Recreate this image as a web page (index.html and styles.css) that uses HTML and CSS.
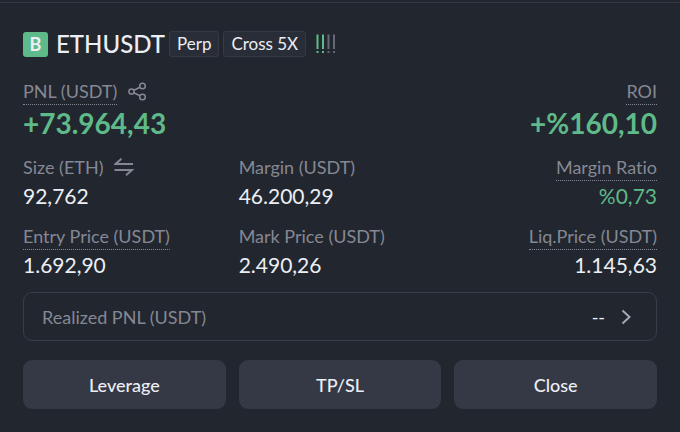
FILE: index.html
```html
<!DOCTYPE html>
<html lang="en">
<head>
    <meta charset="utf-8">
    <meta name="viewport" content="width=device-width, initial-scale=1">
    <title>ETHUSDT Position</title>
    <link rel="stylesheet" href="styles.css">
</head>
<body>
    <main class="position">
        <header class="position-header">
            <span class="side">B</span>
            <h1 class="symbol">ETHUSDT</h1>
            <span class="tag">Perp</span>
            <span class="tag">Cross 5X</span>
            <svg class="risk" width="20" height="20" viewBox="0 0 20 20" aria-hidden="true">
                <g class="risk-on">
                    <path d="M1.5 0.5V15"/><path d="M1.5 17v2"/>
                    <path d="M7 0.5V15"/><path d="M7 17v2"/>
                </g>
                <g class="risk-off">
                    <path d="M12.5 0.5V15"/><path d="M12.5 17v2"/>
                    <path d="M18 0.5V15"/><path d="M18 17v2"/>
                </g>
            </svg>
        </header>

        <dl class="stats">
            <div class="stat wide">
                <dt>
                    <span class="label hint">PNL (USDT)</span>
                    <button type="button" class="icon-btn share" aria-label="Share">
                        <svg width="19" height="19" viewBox="0 0 19 19">
                            <circle cx="3.5" cy="9.5" r="2.6"/>
                            <circle cx="14.5" cy="4" r="2.8"/>
                            <circle cx="14.5" cy="15" r="2.8"/>
                            <path d="M5.8 8.3L12 5.3M5.8 10.7L12 13.7"/>
                        </svg>
                    </button>
                </dt>
                <dd class="big up">+73.964,43</dd>
            </div>
            <div class="stat end">
                <dt><span class="label hint">ROI</span></dt>
                <dd class="big up">+%160,10</dd>
            </div>
            <div class="stat">
                <dt>
                    <span class="label">Size (ETH)</span>
                    <button type="button" class="icon-btn" aria-label="Switch unit">
                        <svg width="20" height="18" viewBox="0 0 20 18">
                            <path d="M7.5 0.8L1.5 6H19M0.5 12H18L12 17.2"/>
                        </svg>
                    </button>
                </dt>
                <dd>92,762</dd>
            </div>
            <div class="stat">
                <dt><span class="label">Margin (USDT)</span></dt>
                <dd>46.200,29</dd>
            </div>
            <div class="stat end">
                <dt><span class="label hint">Margin Ratio</span></dt>
                <dd class="up">%0,73</dd>
            </div>
            <div class="stat">
                <dt><span class="label hint">Entry Price (USDT)</span></dt>
                <dd>1.692,90</dd>
            </div>
            <div class="stat">
                <dt><span class="label">Mark Price (USDT)</span></dt>
                <dd>2.490,26</dd>
            </div>
            <div class="stat end">
                <dt><span class="label hint">Liq.Price (USDT)</span></dt>
                <dd>1.145,63</dd>
            </div>
        </dl>

        <button type="button" class="realized">
            <span class="realized-label">Realized PNL (USDT)</span>
            <span>--</span>
            <svg width="10" height="16" viewBox="0 0 10 16" aria-hidden="true">
                <path d="M1.5 1.5L8.5 8L1.5 14.5"/>
            </svg>
        </button>

        <div class="actions">
            <button type="button" class="action">Leverage</button>
            <button type="button" class="action">TP/SL</button>
            <button type="button" class="action">Close</button>
        </div>
    </main>
</body>
</html>
```

FILE: styles.css
```css
* { box-sizing: border-box; }
body {
    margin: 0;
    padding-top: 2px;
    background: #22262e;
    color: #eceef5;
    font-family: Lato, "Open Sans", sans-serif;
    font-size: 18px;
    font-variant-ligatures: none;
}
button {
    font: inherit;
    color: inherit;
    cursor: pointer;
}
svg {
    display: block;
    fill: none;
    stroke: #858894;
    stroke-width: 2;
}
.position {
    border-top: 1px solid #363944;
    padding: 28px 23px 22px;
}
.position-header {
    display: flex;
    align-items: center;
    gap: 4px;
    height: 26px;
    margin-bottom: 23px;
}
.side {
    width: 25px;
    height: 25px;
    margin-right: 4px;
    border-radius: 3px;
    background: #5fba89;
    text-align: center;
    font-weight: bold;
    line-height: 25px;
}
.symbol {
    margin: 0;
    font-size: 24px;
    font-weight: 500;
    line-height: 26px;
}
.tag {
    padding: 0 7px;
    border: 1px solid #363a45;
    border-radius: 3px;
    background: #292d37;
    font-size: 17px;
    line-height: 24px;
}
.risk { margin-left: 6px; }
.risk-on { stroke: #5fba89; }
.risk-off { stroke: #666975; }

.stats {
    display: grid;
    grid-template-columns: repeat(3, 1fr);
    gap: 14px 13px;
    margin: 0 0 12px;
}
.wide { grid-column: span 2; }
.stat dt {
    display: flex;
    align-items: flex-start;
    gap: 11px;
    height: 25px;
    color: #858894;
}
.stat dd {
    margin: 0;
    font-size: 21px;
    line-height: 30px;
}
.stat .big {
    font-size: 28px;
    font-weight: bold;
    line-height: 37px;
}
.stat .up { color: #5fba89; }
.end { text-align: right; }
.end dt { justify-content: flex-end; }
.label {
    height: 25px;
    line-height: 22px;
    white-space: nowrap;
}
.hint { border-bottom: 1px dotted #858894; }
.icon-btn {
    display: flex;
    align-items: center;
    height: 22px;
    padding: 0;
    border: 0;
    background: none;
}
.share svg { stroke-width: 1.5; }

.realized {
    display: flex;
    align-items: center;
    gap: 16px;
    width: 100%;
    height: 49px;
    margin-bottom: 19px;
    padding: 0 25px 0 18px;
    border: 1px solid #3a3d48;
    border-radius: 9px;
    background: none;
}
.realized-label {
    margin-right: auto;
    color: #858894;
}
.realized svg { stroke: #a5a8b2; }
.actions {
    display: grid;
    grid-template-columns: repeat(3, 1fr);
    gap: 13px;
}
.action {
    height: 49px;
    padding: 0;
    border: 0;
    border-radius: 9px;
    background: #353945;
    font-weight: 500;
}
```
